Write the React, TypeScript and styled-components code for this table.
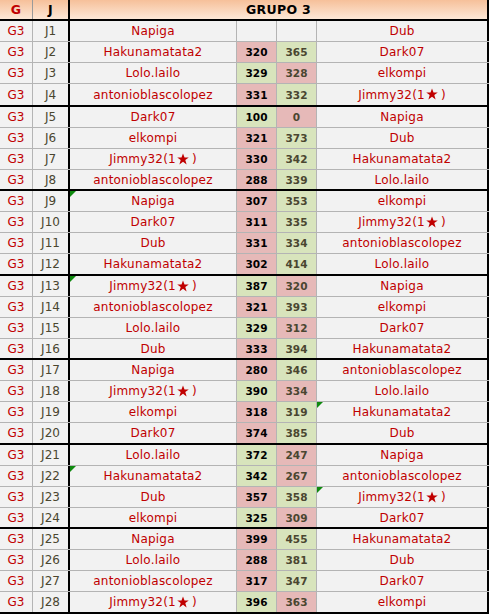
import React from "react";
import styled, {createGlobalStyle, css} from "styled-components";

const Global = createGlobalStyle`
  html, body {
    margin: 0;
    padding: 0;
    background: #ffffff;
  }
  body {
    font-family: "DejaVu Sans", Verdana, sans-serif;
  }
`;

type Match = [string, number | null, number | null, string];

const matches: Match[] = [
    ["Napiga", null, null, "Dub"],
    ["Hakunamatata2", 320, 365, "Dark07"],
    ["Lolo.lailo", 329, 328, "elkompi"],
    ["antonioblascolopez", 331, 332, "Jimmy32(1★)"],
    ["Dark07", 100, 0, "Napiga"],
    ["elkompi", 321, 373, "Dub"],
    ["Jimmy32(1★)", 330, 342, "Hakunamatata2"],
    ["antonioblascolopez", 288, 339, "Lolo.lailo"],
    ["Napiga", 307, 353, "elkompi"],
    ["Dark07", 311, 335, "Jimmy32(1★)"],
    ["Dub", 331, 334, "antonioblascolopez"],
    ["Hakunamatata2", 302, 414, "Lolo.lailo"],
    ["Jimmy32(1★)", 387, 320, "Napiga"],
    ["antonioblascolopez", 321, 393, "elkompi"],
    ["Lolo.lailo", 329, 312, "Dark07"],
    ["Dub", 333, 394, "Hakunamatata2"],
    ["Napiga", 280, 346, "antonioblascolopez"],
    ["Jimmy32(1★)", 390, 334, "Lolo.lailo"],
    ["elkompi", 318, 319, "Hakunamatata2"],
    ["Dark07", 374, 385, "Dub"],
    ["Lolo.lailo", 372, 247, "Napiga"],
    ["Hakunamatata2", 342, 267, "antonioblascolopez"],
    ["Dub", 357, 358, "Jimmy32(1★)"],
    ["elkompi", 325, 309, "Dark07"],
    ["Napiga", 399, 455, "Hakunamatata2"],
    ["Lolo.lailo", 288, 381, "Dub"],
    ["antonioblascolopez", 317, 347, "Dark07"],
    ["Jimmy32(1★)", 396, 363, "elkompi"],
];

// green corner markers, by jornada index and side
const flagsLeft = [8, 12, 21];
const flagsRight = [18, 22];

const groupHeights = [86, 84, 85, 84, 85, 84, 85];

const GRID = "#b4b4b4";
const columns = "33px 37px 167px 40px 40px 172px";

const Sheet = styled.div`
  width: 489px;
  display: flex;
  flex-direction: column;
`;

const HeaderRow = styled.div`
  display: grid;
  grid-template-columns: ${columns};
  height: 21px;
  box-sizing: border-box;
  border-bottom: 2px solid #000;
  background: linear-gradient(#f6c09a, #fde8d7);
`;

const HeadCell = styled.div<{ $red?: boolean; $edge?: "thin" | "thick"; $span?: boolean }>`
  display: flex;
  align-items: center;
  justify-content: center;
  font-weight: bold;
  font-size: 12.5px;
  letter-spacing: 0.3px;
  color: ${p => p.$red ? "#c00000" : "#000"};
  box-sizing: border-box;
  border-right: ${p => p.$edge === "thick" ? "2px solid #000" : `1px solid #9a9a9a`};
  ${p => p.$span && css`grid-column: 3 / -1;`}
`;

const Group = styled.div<{ $h: number }>`
  height: ${p => p.$h}px;
  display: flex;
  flex-direction: column;
`;

const Row = styled.div`
  display: grid;
  grid-template-columns: ${columns};
  flex: 0 0 21px;
  box-sizing: border-box;
  border-bottom: 1px solid ${GRID};

  &:last-child {
    flex: 1 1 auto;
    border-bottom: 2px solid #000;
  }
`;

type Tone = "win" | "lose" | "none";

const Cell = styled.div<{ $thick?: boolean; $tone?: Tone; $flag?: boolean }>`
  position: relative;
  display: flex;
  align-items: center;
  justify-content: center;
  box-sizing: border-box;
  white-space: nowrap;
  border-right: ${p => p.$thick ? "2px solid #000" : `1px solid ${GRID}`};
  background: ${p => p.$tone === "win" ? "#d8e4bc" : p.$tone === "lose" ? "#e6b9b8" : "#f2f2f2"};
  ${p => p.$flag && css`
    &::before {
      content: "";
      position: absolute;
      top: 0;
      left: 0;
      border-top: 6px solid #0f8a0f;
      border-right: 6px solid transparent;
    }
  `}
`;

const Group3 = styled(Cell)`
  color: #c00000;
  font-size: 12px;
`;

const Jornada = styled(Cell)`
  color: #4a4630;
  font-size: 12px;
`;

const Name = styled(Cell)`
  color: #c00000;
  font-size: 12px;
  letter-spacing: 0.2px;
`;

const Score = styled(Cell)<{ $dark?: boolean }>`
  font-weight: bold;
  font-size: 10.5px;
  color: ${p => p.$dark ? "#000" : "#4a4630"};
`;

const StarIcon = styled.svg`
  width: 12px;
  height: 12px;
  margin: -1px 3px 0 1px;
  flex: none;
`;

function Star() {
    return <StarIcon viewBox="0 0 24 24" aria-label="★">
        <polygon fill="#c00000"
                 points="12,1 15,9 23.5,9 16.6,14.2 19.2,22.8 12,17.6 4.8,22.8 7.4,14.2 0.5,9 9,9"/>
    </StarIcon>
}

function PlayerName({name}: { name: string }) {
    if (!name.includes("★")) return <>{name}</>;
    const [head, tail] = name.split("★");
    return <>{head}<Star/>{tail}</>;
}

function tone(a: number | null, b: number | null): Tone {
    if (a === null || b === null) return "none";
    return a > b ? "win" : "lose";
}

export default function App() {
    const groups: Match[][] = [];
    for (let i = 0; i < matches.length; i += 4) groups.push(matches.slice(i, i + 4));

    return <>
        <Global/>
        <Sheet>
            <HeaderRow>
                <HeadCell $red>G</HeadCell>
                <HeadCell $edge="thick">J</HeadCell>
                <HeadCell $edge="thick" $span>GRUPO 3</HeadCell>
            </HeaderRow>
            {groups.map((group, g) =>
                <Group key={g} $h={groupHeights[g]}>
                    {group.map(([home, s1, s2, away], r) => {
                        const idx = g * 4 + r;
                        return <Row key={idx}>
                            <Group3>G3</Group3>
                            <Jornada $thick>J{idx + 1}</Jornada>
                            <Name $flag={flagsLeft.includes(idx)}><PlayerName name={home}/></Name>
                            <Score $dark $tone={tone(s1, s2)}>{s1 ?? ""}</Score>
                            <Score $tone={tone(s2, s1)}>{s2 ?? ""}</Score>
                            <Name $thick $flag={flagsRight.includes(idx)}><PlayerName name={away}/></Name>
                        </Row>
                    })}
                </Group>
            )}
        </Sheet>
    </>
}
